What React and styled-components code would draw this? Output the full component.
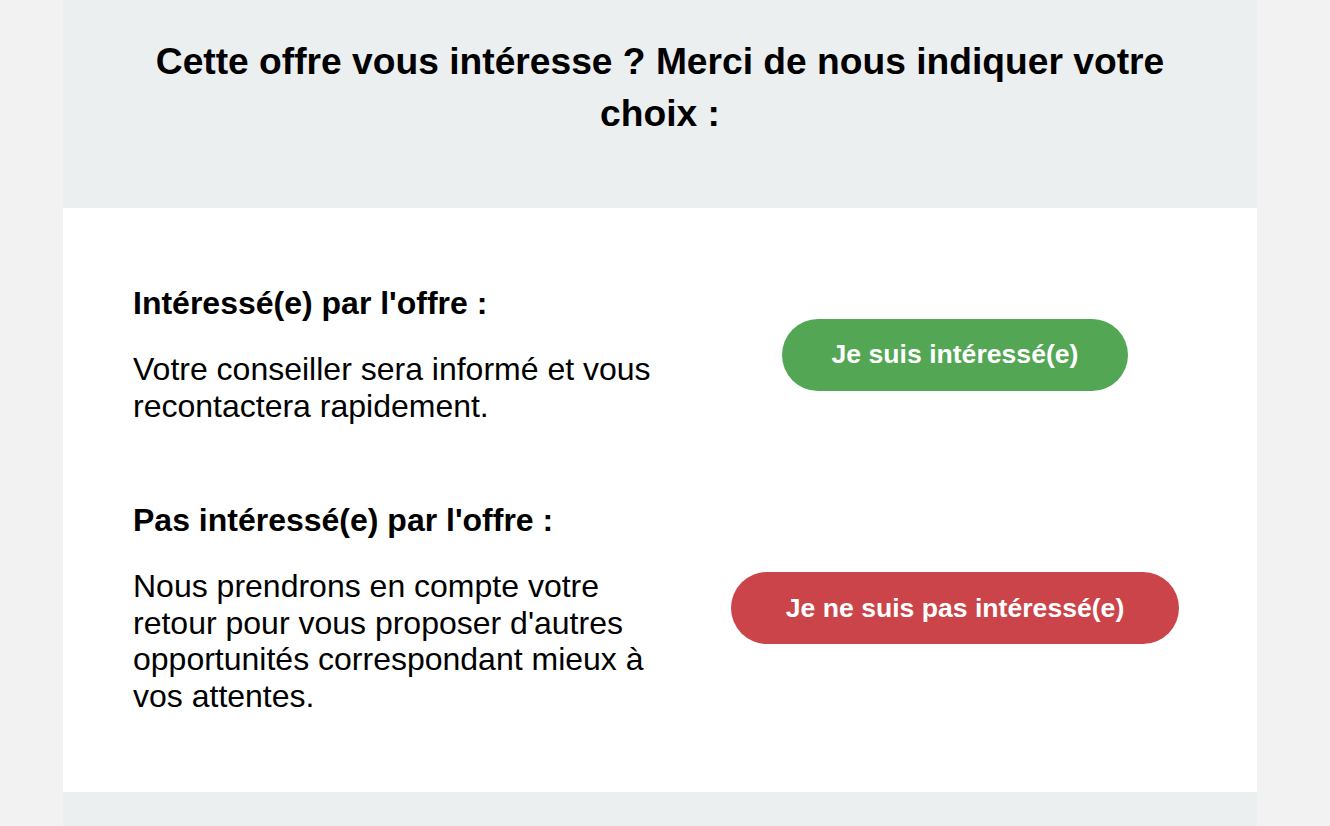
import React from "react";
import styled, { createGlobalStyle } from "styled-components";

const GlobalStyle = createGlobalStyle`
  html, body {
    margin: 0;
    padding: 0;
    background: #f2f2f2;
    font-family: "Liberation Sans", Arial, Helvetica, sans-serif;
    color: #000;
  }
`;

const Column = styled.div`
  width: 1194px;
  margin: 0 0 0 63px;
  display: flex;
  flex-direction: column;
`;

const Header = styled.header`
  background: #ebeff0;
  height: 208px;
  box-sizing: border-box;
  padding: 36px 60px 0;
`;

const Title = styled.h1`
  margin: 0;
  text-align: center;
  font-size: 37.2px;
  line-height: 51.5px;
  font-weight: 700;
`;

const Body = styled.section`
  background: #fff;
  height: 584px;
  box-sizing: border-box;
  padding: 77px 20px 0 70px;
  display: flex;
  flex-direction: column;
  gap: 78px;
`;

const Row = styled.div`
  display: grid;
  grid-template-columns: 540px 1fr;
  align-items: center;
`;

const Info = styled.div`
  display: flex;
  flex-direction: column;
  gap: 29px;
`;

const Heading = styled.h2`
  margin: 0;
  font-size: 32px;
  line-height: 37px;
  font-weight: 700;
`;

const Text = styled.p`
  margin: 0;
  font-size: 32px;
  line-height: 36.6px;
`;

const Action = styled.div`
  display: flex;
  justify-content: center;
`;

const Button = styled.a`
  display: inline-flex;
  align-items: center;
  justify-content: center;
  height: 72px;
  padding: 0 ${(p) => p.$pad}px;
  border-radius: 36px;
  background: ${(p) => (p.$tone === "danger" ? "#cb444a" : "#53a653")};
  color: #fff;
  font-size: 26.6px;
  font-weight: 700;
  text-decoration: none;
  cursor: pointer;
`;

const Footer = styled.div`
  background: #ebeff0;
  height: 60px;
`;

export default function App() {
  return (
    <>
      <GlobalStyle />
      <Column>
        <Header>
          <Title>Cette offre vous intéresse ? Merci de nous indiquer votre choix :</Title>
        </Header>
        <Body>
          <Row>
            <Info>
              <Heading>Intéressé(e) par l'offre :</Heading>
              <Text>
                Votre conseiller sera informé et vous recontactera rapidement.
              </Text>
            </Info>
            <Action>
              <Button $pad={50}>Je suis intéressé(e)</Button>
            </Action>
          </Row>
          <Row>
            <Info>
              <Heading>Pas intéressé(e) par l'offre :</Heading>
              <Text>
                Nous prendrons en compte votre retour pour vous proposer
                d'autres opportunités correspondant mieux à vos attentes.
              </Text>
            </Info>
            <Action>
              <Button $tone="danger" $pad={55}>
                Je ne suis pas intéressé(e)
              </Button>
            </Action>
          </Row>
        </Body>
        <Footer />
      </Column>
    </>
  );
}
